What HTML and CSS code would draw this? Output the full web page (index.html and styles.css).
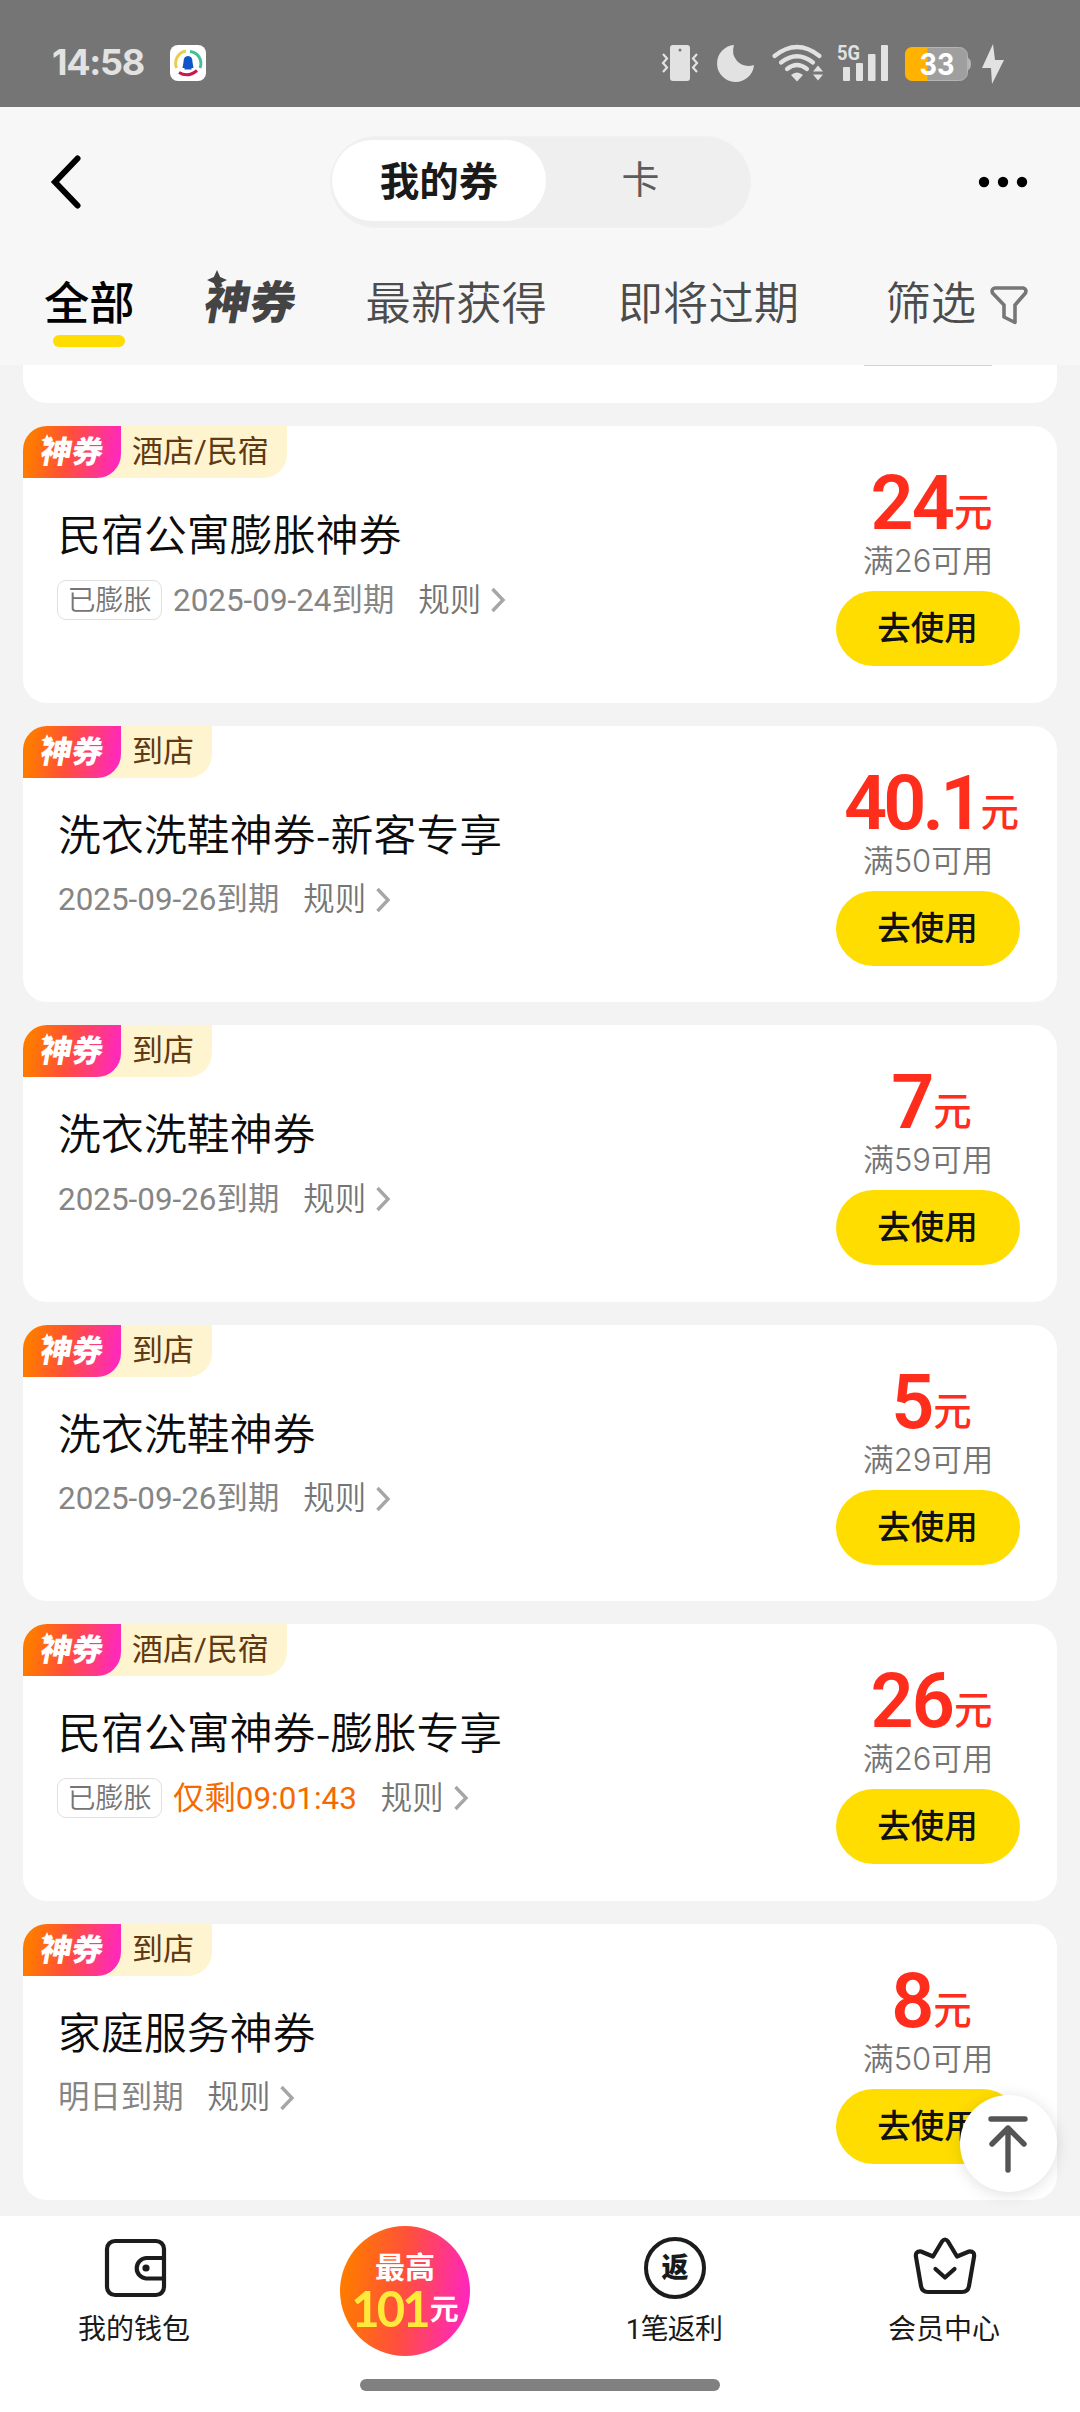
FILE: index.html
```html
<!DOCTYPE html>
<html lang="zh-CN">
<head>
<meta charset="utf-8">
<title>我的券</title>
<link rel="stylesheet" href="styles.css">
</head>
<body>
<svg class="defs" width="0" height="0">
  <symbol id="chev" viewBox="0 0 16 26"><path d="M2.500 2 13 13 2.500 24" fill="none" stroke="#a6a6a6" stroke-width="3.400"/></symbol>
  <symbol id="spark" viewBox="0 0 16 16"><path d="M8 0 10.500 5.500 16 8 10.500 10.500 8 16 5.500 10.500 0 8 5.500 5.500Z" fill="currentColor"/></symbol>
</svg>
<div class="status">
  <span class="time">14:58</span>
  <svg class="app" viewBox="0 0 36 36"><rect width="36" height="36" rx="8" fill="#fff"/><g fill="none" stroke-width="3"><path d="M6.500 23A12.500 12.500 0 0 1 16 6" stroke="#e5cf52"/><path d="M20 6.500A12 12 0 0 1 30 23" stroke="#3fc09a"/><path d="M9 27.500Q18 33 27 25.500" stroke="#c9164f"/></g><path d="M18 11q4.500 0 4.500 6l1 6h-2v1.500h-7V23h-2l1-6q0-6 4.500-6" fill="#0e55cc"/></svg>
  <svg class="sys" viewBox="0 0 350 44">
    <g fill="#e2e2e2">
      <rect x="10" y="4" width="20" height="36" rx="3"/><circle cx="20" cy="9" r="1.500" fill="#777"/>
      <path d="M3 13l4 4.500-4 4.500 4 4.500-4 4.500M37 13l-4 4.500 4 4.500-4 4.500 4 4.500" fill="none" stroke="#e2e2e2" stroke-width="2.200"/>
      <path d="M74 4A18.500 18.500 0 1 0 94 24Q84 27 77 20Q71 13 74 4Z"/>
      <g fill="none" stroke="#e2e2e2" stroke-width="4.200" stroke-linecap="round"><path d="M114.500 15Q137 -3 159.500 15"/><path d="M121 21.500Q137 9 153 21.500"/><path d="M127 28Q137 20 147 28"/></g>
      <path d="M131 34q6-5 12 0l-6 6.500zM158 24.500l5 6h-10zM153 33.500h10l-5 6z"/>
      <rect x="183" y="26" width="7" height="14" rx="1"/><rect x="196" y="22" width="7" height="18" rx="1"/><rect x="208" y="13" width="7.500" height="27" rx="1"/><rect x="221" y="4" width="7" height="36" rx="1"/>
      <text x="177" y="19" class="fiveg" textLength="23" lengthAdjust="spacingAndGlyphs">5G</text>
      <path d="M307 17h1q3 1 3 6t-3 6h-1z" fill="#b5b5b5"/>
      <rect x="245.500" y="6.500" width="62" height="33" rx="8" fill="#9f9f9f" stroke="#b5b5b5"/>
      <path d="M267.500 6H253q-8 0-8 8v18q0 8 8 8h14.500z" fill="#ffb200"/>
      <text x="277" y="34" class="batt" text-anchor="middle" textLength="35" lengthAdjust="spacingAndGlyphs">33</text>
      <path d="M333 3 322 27h9l1 16 12-24h-9z"/>
    </g>
  </svg>
</div>
<header class="head">
  <div class="nav">
    <svg class="back" viewBox="0 0 34 58"><path d="M28.500 5.500 6 29 28.500 52.500" fill="none" stroke="#000" stroke-width="6" stroke-linecap="round"/></svg>
    <div class="seg"><span class="seg-on">我的券</span><span class="seg-off">卡</span></div>
    <svg class="dots" viewBox="0 0 50 12"><circle cx="6" cy="6" r="5.200"/><circle cx="25" cy="6" r="5.200"/><circle cx="44" cy="6" r="5.200"/></svg>
  </div>
  <div class="tabs">
    <span class="tab on">全部</span>
    <span class="tab brand"><span class="skew">神券</span><svg class="spark"><use href="#spark"/></svg></span>
    <span class="tab">最新获得</span>
    <span class="tab">即将过期</span>
    <span class="filter">筛选<svg viewBox="0 0 38 40"><path d="M5 3H33Q37 4 35.500 8L25 20V37.500L14 32V20L2.500 8Q1 4 5 3Z" fill="none" stroke="#777" stroke-width="3.600" stroke-linejoin="round"/></svg></span>
  </div>
</header>
<main class="list">
  <section class="card tail"><i></i></section>
  <section class="card">
    <div class="tag"><b><span class="skew">神券</span><svg class="spark"><use href="#spark"/></svg></b><span>酒店/民宿</span></div>
    <div class="info"><h2>民宿公寓膨胀神券</h2><p><em>已膨胀</em><span>2025-09-24到期</span><a>规则</a><svg class="chev"><use href="#chev"/></svg></p></div>
    <div class="buy"><div class="price">24<small>元</small></div><div class="cond">满26可用</div><button>去使用</button></div>
  </section>
  <section class="card">
    <div class="tag"><b><span class="skew">神券</span><svg class="spark"><use href="#spark"/></svg></b><span>到店</span></div>
    <div class="info"><h2>洗衣洗鞋神券-新客专享</h2><p><span>2025-09-26到期</span><a>规则</a><svg class="chev"><use href="#chev"/></svg></p></div>
    <div class="buy"><div class="price long">40.1<small>元</small></div><div class="cond">满50可用</div><button>去使用</button></div>
  </section>
  <section class="card">
    <div class="tag"><b><span class="skew">神券</span><svg class="spark"><use href="#spark"/></svg></b><span>到店</span></div>
    <div class="info"><h2>洗衣洗鞋神券</h2><p><span>2025-09-26到期</span><a>规则</a><svg class="chev"><use href="#chev"/></svg></p></div>
    <div class="buy"><div class="price">7<small>元</small></div><div class="cond">满59可用</div><button>去使用</button></div>
  </section>
  <section class="card">
    <div class="tag"><b><span class="skew">神券</span><svg class="spark"><use href="#spark"/></svg></b><span>到店</span></div>
    <div class="info"><h2>洗衣洗鞋神券</h2><p><span>2025-09-26到期</span><a>规则</a><svg class="chev"><use href="#chev"/></svg></p></div>
    <div class="buy"><div class="price">5<small>元</small></div><div class="cond">满29可用</div><button>去使用</button></div>
  </section>
  <section class="card">
    <div class="tag"><b><span class="skew">神券</span><svg class="spark"><use href="#spark"/></svg></b><span>酒店/民宿</span></div>
    <div class="info"><h2>民宿公寓神券-膨胀专享</h2><p><em>已膨胀</em><span class="hot">仅剩09:01:43</span><a>规则</a><svg class="chev"><use href="#chev"/></svg></p></div>
    <div class="buy"><div class="price">26<small>元</small></div><div class="cond">满26可用</div><button>去使用</button></div>
  </section>
  <section class="card">
    <div class="tag"><b><span class="skew">神券</span><svg class="spark"><use href="#spark"/></svg></b><span>到店</span></div>
    <div class="info"><h2>家庭服务神券</h2><p><span>明日到期</span><a>规则</a><svg class="chev"><use href="#chev"/></svg></p></div>
    <div class="buy"><div class="price">8<small>元</small></div><div class="cond">满50可用</div><button>去使用</button></div>
  </section>
</main>
<div class="totop"><svg viewBox="0 0 44 60"><path d="M5 5H39M22 14V56M6 30 22 14 38 30" fill="none" stroke="#555" stroke-width="5.400" stroke-linecap="round" stroke-linejoin="round"/></svg></div>
<footer class="foot">
  <div class="items">
    <div class="item"><svg viewBox="0 0 64 64"><g fill="none" stroke="#1c1c1c" stroke-width="4.200"><rect x="4" y="5" width="57" height="54" rx="8"/><path d="M60 22H43a10.300 10.300 0 0 0 0 20.500H60"/></g><circle cx="43" cy="32" r="3.600" fill="#1c1c1c"/></svg><span>我的钱包</span></div>
    <div class="item"><div class="ball"><span>最高</span><strong>101<small>元</small></strong></div></div>
    <div class="item"><div class="ring">返</div><span class="rebate">1笔返利</span></div>
    <div class="item"><svg viewBox="0 0 64 64"><path d="M3 21Q2 15 8 15.500L20 20.500 29 5.500Q32 1.500 35 5.500L44 20.500 56 15.500Q62 15 61 21L56 50Q55 56 49 56H15Q9 56 8 50Z" fill="none" stroke="#1c1c1c" stroke-width="4.200" stroke-linejoin="round"/><path d="M22.500 33 32 41.500 41.500 33" fill="none" stroke="#1c1c1c" stroke-width="4.200" stroke-linecap="round" stroke-linejoin="round"/></svg><span>会员中心</span></div>
  </div>
  <div class="home"></div>
</footer>
</body>
</html>
```
FILE: styles.css
```css
* { box-sizing: border-box; }
body { margin: 0; width: 1080px; height: 2412px; overflow: hidden; position: relative; display: flex; flex-direction: column; background: #f3f3f3; font-family: Roboto, "Noto Sans CJK SC", sans-serif; color: #1a1a1a; }
.defs { position: absolute; }
svg { display: block; flex: none; }
span, a, small, button { white-space: nowrap; }

.status { height: 107px; background: #757575; display: flex; align-items: center; padding: 18px 0 0 52px; color: #e2e2e2; flex: none; }
.time { font: 700 36px/38px Inter, Roboto, sans-serif; width: 118px; letter-spacing: -1.300px; padding-bottom: 1px; }
.app { width: 36px; height: 36px; }
.sys { width: 350px; height: 44px; margin-left: 454px; overflow: visible; }
.fiveg { font: 700 21px Roboto, sans-serif; }
.batt { font: 700 30px Inter, sans-serif; fill: #fff; }

.head { height: 258px; background: #f7f7f7; flex: none; }
.nav { height: 149px; display: flex; align-items: center; padding: 1px 52px 0 49px; }
.back { width: 34px; height: 58px; }
.seg { margin-left: 247px; width: 421px; height: 92px; border-radius: 46px; background: #efefef; display: flex; align-items: center; padding: 0 2px 3px 1px; border: 1px solid #f1f1f1; }
.seg-on { width: 214px; height: 81px; border-radius: 41px; background: #fff; font-size: 39.500px; font-weight: 700; text-align: center; line-height: 85px; }
.seg-off { flex: 1; text-align: center; font-size: 38px; color: #5c5c5c; line-height: 85px; padding-right: 13px; }
.dots { width: 50px; height: 12px; margin-left: auto; }
.tabs { display: flex; height: 109px; padding: 22px 51px 0 44px; align-items: flex-start; font-size: 45.300px; font-weight: 350; line-height: 54px; color: #4c4c4c; }
.tab { flex: none; }
.tab.on { width: 90px; font-weight: 500; color: #000; }
.tab.on::after { content: ""; display: block; width: 72px; height: 12px; border-radius: 6px; background: #fd0; margin: 3px auto 0; }
.brand { position: relative; margin: -1px 70px 0 71px; font-weight: 900; color: #444; }
.skew { display: inline-block; transform: skewX(-10deg); }
.brand .spark { position: absolute; width: 20px; height: 20px; left: 2px; top: -7px; }
.tab + .tab:not(.brand):not(:nth-child(3)) { margin-left: 71px; }
.filter { margin-left: auto; display: flex; align-items: center; }
.filter svg { width: 38px; height: 40px; margin: 0 1px 0 14px; }

.list { height: 1851px; padding: 0 23px; display: flex; flex-direction: column; gap: 23px; overflow: hidden; flex: none; }
.card { height: 276.500px; flex: none; background: #fff; border-radius: 24px; display: grid; grid-template-columns: 1fr 184px; grid-template-rows: 52px 1fr; padding-right: 37px; }
.card.tail { height: 38px; border-radius: 0 0 24px 24px; display: block; }
.tail i { display: block; width: 128px; height: 1px; background: #ece34a; margin-left: 841px; }
.tag { display: flex; justify-self: start; height: 52px; background: #fff4d0; border-radius: 24px 0 24px 0; }
.tag > b { position: relative; width: 98px; border-radius: 24px 0 24px 0; background: linear-gradient(100deg, #ff7a00 10%, #ff5038 45%, #ff2ab8 92%); color: #fff; font-weight: 900; font-size: 31px; line-height: 54px; text-align: center; }
.tag .spark { position: absolute; width: 12px; height: 12px; left: 18px; top: 8px; }
.tag > span { font-size: 31px; line-height: 52px; padding: 0 18px 0 11px; color: #5f3a12; font-weight: 400; }
.info { grid-row: 2; padding: 23px 0 0 35px; }
h2 { margin: 0; font: 350 42.800px/62px "Noto Sans CJK SC", sans-serif; color: #0c0c0c; letter-spacing: .15px; }
.info p { margin: 17px 0 0; height: 40px; display: flex; align-items: center; font-size: 31.400px; line-height: 40px; font-weight: 350; color: #757575; }
.info p > span { font-weight: 400; color: #858585; margin-top: 1px; }
.info em { font-style: normal; font-size: 28px; line-height: 39px; height: 40px; width: 105px; border: 1.500px solid #e0e0e0; border-radius: 9px; text-align: center; margin: 0 11px 0 -1px; white-space: nowrap; }
.info a { margin: 1px 0 0 24px; }
.info p > .hot { color: #f56a00; }
.chev { width: 16px; height: 26px; margin-left: 9px; }
.buy { grid-column: 2; grid-row: 1 / 3; padding-top: 39px; display: flex; flex-direction: column; align-items: center; }
.price { font-size: 75.500px; line-height: 76px; height: 76px; font-weight: 600; letter-spacing: -2px; color: #ff2d1c; white-space: nowrap; margin-right: -7px; }
.price small { font-size: 38.500px; line-height: 38px; font-weight: 500; letter-spacing: 0; margin-left: 1px; vertical-align: 3px; }
.price.long { letter-spacing: -3.800px; }
.cond { font: 350 31px/38px Inter, "Noto Sans CJK SC", sans-serif; color: #757575; white-space: nowrap; margin-top: 1px; }
button { margin: 11px 0 0; padding: 0 1px 0 0; width: 184px; height: 75px; border: 0; border-radius: 38px; background: #fd0; font: 500 33.500px/75px Roboto, "Noto Sans CJK SC", sans-serif; color: #111; flex: none; }

.totop { position: absolute; left: 960px; top: 2095px; width: 97px; height: 97px; border-radius: 50%; background: #fff; box-shadow: 0 2px 16px rgba(0,0,0,.13); display: flex; justify-content: center; padding: 19px 1px 0 0; }
.totop svg { width: 44px; height: 60px; }
.foot { height: 196px; background: #fff; flex: none; position: relative; }
.items { display: flex; height: 163px; }
.item { width: 270px; display: flex; flex-direction: column; align-items: center; padding-top: 20px; font-size: 28px; line-height: 40px; }
.item > span { margin-right: 2px; }
.item > svg { width: 64px; height: 64px; margin-bottom: 10px; }
.ring { width: 62px; height: 62px; border: 4px solid #1c1c1c; border-radius: 50%; margin: 1px 0 11px; font-size: 27px; font-weight: 900; line-height: 54px; text-align: center; }
.rebate { letter-spacing: -.8px; }
.ball { width: 130px; height: 130px; margin-top: -10px; border-radius: 50%; background: linear-gradient(97deg, #ff7a00 8%, #ff503c 48%, #ff28b8 92%); color: #fff; display: flex; flex-direction: column; align-items: center; padding-top: 22px; font-weight: 700; font-size: 30px; }
.ball strong { font: 700 49px/40px Lato, sans-serif; color: #ffe93b; letter-spacing: -3px; white-space: nowrap; }
.ball small { font: 700 29px/28px "Noto Sans CJK SC", sans-serif; color: #fff; letter-spacing: 0; margin-left: 2px; vertical-align: 7px; }
.home { width: 360px; height: 12px; border-radius: 6px; background: #808080; margin: 0 auto; }
```
